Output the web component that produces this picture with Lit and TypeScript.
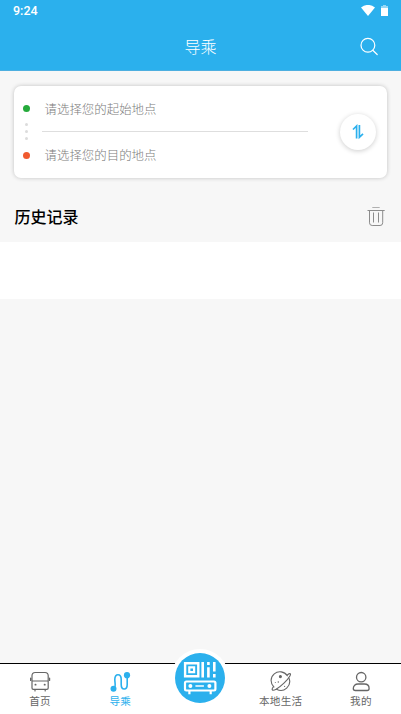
import { LitElement, html, css, svg } from "lit";
import { customElement, state } from "lit/decorators.js";

const icons = {
  home: svg`<svg width="22" height="22" viewBox="0 0 22 22" fill="none" stroke="#666" stroke-width="1.2" stroke-linecap="round" stroke-linejoin="round">
    <path d="M3 17V4.800Q3 1.500 6.200 1.500H16Q19.200 1.500 19.200 4.800V17Q19.200 18.300 17.900 18.300H4.300Q3 18.300 3 17ZM3 10H19.200M1.600 7V9.500M20.600 7V9.500M6 18.500V20M16.200 18.500V20"/>
    <path d="M6.400 13.700H6.600M15.600 13.700H15.800" stroke-width="1.800"/></svg>`,
  route: svg`<svg width="22" height="22" viewBox="0 0 22 22" fill="none" stroke="#2bb0ed" stroke-width="1.600">
    <path d="M4.500 17.500C7.500 16.500 5.800 12.500 5.800 8.500C5.800 5.300 7 3.800 9 3.800S12.200 5.300 12.200 8.500V13.500C12.200 16.500 13.200 18 15.200 18S18.200 16.500 18.200 13.500V4.500"/>
    <circle cx="4.500" cy="17.800" r="3" fill="#2bb0ed" stroke="none"/><circle cx="18" cy="4.200" r="3.100" fill="#2bb0ed" stroke="none"/></svg>`,
  planet: svg`<svg width="22" height="22" viewBox="0 0 22 22" fill="none" stroke="#666" stroke-width="1.100" stroke-linecap="round">
    <path d="M17.300 4.800A8.800 8.800 0 1 0 3.900 16M6.600 18.200A8.800 8.800 0 0 0 19 7.200"/>
    <path d="M17.300 4C20.300 1.700 21.300 2.600 19.900 5C17.500 9.200 11 15.600 6.200 18.200C2.400 20.200 1 19 3.200 16"/>
    <circle cx="10.400" cy="5.600" r="1" fill="#666"/><circle cx="8.300" cy="11" r=".7" fill="#666" stroke="none"/><circle cx="5.300" cy="11.500" r=".5" fill="#666" stroke="none"/><circle cx="14.600" cy="15.300" r=".6" fill="#666" stroke="none"/></svg>`,
  user: svg`<svg width="22" height="22" viewBox="0 0 22 22" fill="none" stroke="#666" stroke-width="1.300">
    <circle cx="11.200" cy="6.200" r="4.700"/>
    <path d="M5.300 19.500Q3.300 19.500 3.300 17.400C3.300 14.800 5.300 13 8 13H14.400C17.100 13 19.100 14.800 19.100 17.400Q19.100 19.500 17.100 19.500Z"/></svg>`,
  search: svg`<svg width="20" height="20" viewBox="0 0 20 20" fill="none" stroke="#fff" stroke-width="1.200" stroke-linecap="round">
    <circle cx="8.900" cy="8.300" r="6.900"/><path d="M13.800 13.300L18.200 17.500"/></svg>`,
  swap: svg`<svg width="12" height="16" viewBox="0 0 12 16" fill="none" stroke="#2bb0ed" stroke-width="1.700">
    <path d="M1 5.500L4.600 2V14.500M7.400 1V13.300L11 9.800"/></svg>`,
  trash: svg`<svg width="20" height="22" viewBox="0 0 20 22" fill="none" stroke="#8c8c8c">
    <path d="M6.300 1.500H13.700" stroke="#b0b0b0"/><path d="M1.500 4.500H18.700M3.500 5V16.800Q3.500 19.500 6.200 19.500H14Q16.700 19.500 16.700 16.800V5M7.500 6.500V16.500M12.500 6.500V16.500"/></svg>`,
  wifi: svg`<svg width="14" height="12" viewBox="0 0 14 12"><path d="M0 2.500Q7-2.700 14 2.500L7 11Z" fill="#fff"/></svg>`,
  battery: svg`<svg width="7" height="12" viewBox="0 0 7 12"><path d="M2 0H5V1H7V3H0V1H2Z" fill="#fff" opacity=".5"/><path d="M0 3H7V11H0Z" fill="#fff"/></svg>`,
  busCode: svg`<svg width="50" height="50" viewBox="0 0 50 50" fill="none" stroke="#fff" stroke-width="2.400">
    <circle cx="25" cy="25" r="25" fill="#2bb0ed" stroke="none"/>
    <g transform="translate(-.6 0)">
    <path d="M10.700 10.200H23.900V23.200H10.700Z"/><path d="M14.900 14.300H19.700V19.100H14.900Z" stroke-width="2.200"/>
    <path d="M28.300 9V24.400M34 9V12M34 14.300V24.400M39.900 9V18.500M39.900 21V24.400" stroke-width="2.600"/>
    <path d="M12 28.500H39.600Q41 28.500 41 29.900V36.100Q41 37.500 39.600 37.500H12Q10.600 37.500 10.600 36.100V29.900Q10.600 28.500 12 28.500ZM15 38V41.300M36.300 38V41.300" stroke-width="2.200"/>
    <path d="M21 33H29.500" stroke-width="1.500"/>
    <circle cx="16" cy="33" r="2" fill="#fff" stroke="none"/><circle cx="35" cy="33" r="2" fill="#fff" stroke="none"/></g></svg>`,
};

@customElement("app-root")
export class AppRoot extends LitElement {
  @state() private active = "导乘";

  static styles = css`
    :host { display: flex; flex-direction: column; height: 714px; overflow: hidden; background: #f7f7f7; font-family: Roboto, "Noto Sans CJK SC", sans-serif; }
    * { box-sizing: border-box; }
    svg { display: block; flex: none; }
    header { height: 71px; flex: none; background: #2bb0ed; color: #fff; border-bottom: 1px solid #4dafe0; }
    .status { height: 22px; display: flex; align-items: center; padding: 0 13px; }
    .time { flex: 1; font-size: 12.500px; font-weight: 500; line-height: 14px; }
    .signals { display: flex; gap: 6px; margin-top: -1px; }
    .title-bar { height: 49px; display: grid; grid-template-columns: 1fr auto 1fr; align-items: center; padding: 0 22px; }
    h1 { grid-column: 2; margin: 0; padding-top: 2px; font-size: 16px; font-weight: 300; line-height: 24px; }
    .find { justify-self: end; }
    .planner { margin: 15px 14px 0 14px; height: 92px; flex: none; display: flex; align-items: center; background: #fff; border-radius: 7px; box-shadow: 0 0 4px rgba(0, 0, 0, .22); padding: 0 11px 1px 9px; }
    .markers { width: 7px; height: 54px; display: flex; flex-direction: column; align-items: center; justify-content: space-between; }
    .dot { width: 7px; height: 7px; border-radius: 50%; background: #25aa3b; }
    .dot.end { background: #f05a2f; }
    .steps { display: flex; flex-direction: column; gap: 4px; }
    .steps i { width: 3px; height: 3px; border-radius: 50%; background: #dcdcdc; }
    .fields { width: 266px; margin-left: 12px; }
    .field { height: 45px; padding-left: 2.500px; font-size: 12.450px; font-weight: 300; line-height: 48px; color: #7c7c7c; }
    .field + .field { height: 46px; border-top: 1px solid #dedede; line-height: 48px; }
    .swap { width: 36px; height: 36px; margin-left: auto; border-radius: 50%; background: #fff; display: grid; place-items: center; box-shadow: 0 1px 5px rgba(0, 0, 0, .2); }
    .history-head { height: 64px; flex: none; display: flex; align-items: center; justify-content: space-between; padding: 14px 15px 0 14.500px; }
    h2 { margin: 0; padding-top: 2px; font-size: 16px; font-weight: 500; line-height: 24px; color: #000; }
    .history { height: 57px; flex: none; background: #fff; }
    nav { margin-top: auto; height: 51px; flex: none; display: grid; grid-template-columns: repeat(5, 1fr); border-top: 1px solid #000; background: #fff; }
    .tab { display: flex; flex-direction: column; align-items: center; gap: 1px; padding-top: 7px; color: #666; font-size: 10.600px; letter-spacing: .3px; font-weight: 400; line-height: 16px; }
    .tab.active { color: #2bb0ed; }
    .scan { justify-self: center; width: 58px; height: 58px; margin-top: -15px; display: grid; place-items: center; border-radius: 50%; background: #fff; }
  `;

  private tab(label: string, icon: unknown) {
    return html`<div class="tab ${this.active === label ? "active" : ""}" @click=${() => (this.active = label)}>${icon}<span>${label}</span></div>`;
  }

  render() {
    return html`
      <header>
        <div class="status"><span class="time">9:24</span><div class="signals">${icons.wifi}${icons.battery}</div></div>
        <div class="title-bar"><h1>导乘</h1><div class="find">${icons.search}</div></div>
      </header>
      <section class="planner">
        <div class="markers"><i class="dot"></i><div class="steps"><i></i><i></i><i></i></div><i class="dot end"></i></div>
        <div class="fields"><div class="field">请选择您的起始地点</div><div class="field">请选择您的目的地点</div></div>
        <div class="swap">${icons.swap}</div>
      </section>
      <div class="history-head"><h2>历史记录</h2>${icons.trash}</div>
      <div class="history"></div>
      <nav>
        ${this.tab("首页", icons.home)}
        ${this.tab("导乘", icons.route)}
        <div class="scan">${icons.busCode}</div>
        ${this.tab("本地生活", icons.planet)}
        ${this.tab("我的", icons.user)}
      </nav>`;
  }
}
